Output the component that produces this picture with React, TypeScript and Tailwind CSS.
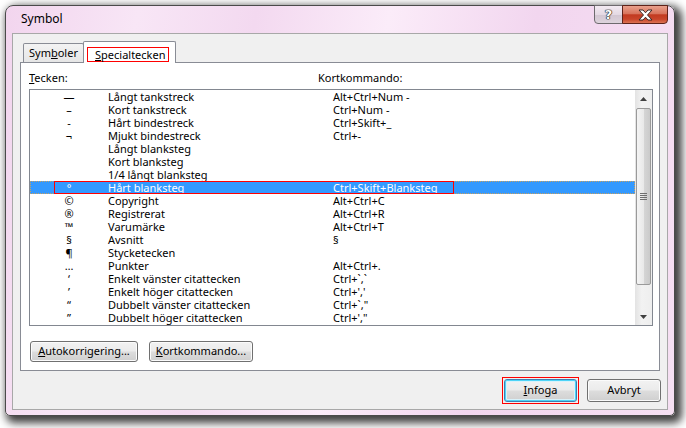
import React from "react";

const rows: [string, string, string][] = [
    ["—", "Långt tankstreck", "Alt+Ctrl+Num -"],
    ["–", "Kort tankstreck", "Ctrl+Num -"],
    ["-", "Hårt bindestreck", "Ctrl+Skift+_"],
    ["¬", "Mjukt bindestreck", "Ctrl+-"],
    ["", "Långt blanksteg", ""],
    ["", "Kort blanksteg", ""],
    ["", "1/4 långt blanksteg", ""],
    ["°", "Hårt blanksteg", "Ctrl+Skift+Blanksteg"],
    ["©", "Copyright", "Alt+Ctrl+C"],
    ["®", "Registrerat", "Alt+Ctrl+R"],
    ["™", "Varumärke", "Alt+Ctrl+T"],
    ["§", "Avsnitt", "§"],
    ["¶", "Stycketecken", ""],
    ["…", "Punkter", "Alt+Ctrl+."],
    ["‘", "Enkelt vänster citattecken", "Ctrl+`,`"],
    ["’", "Enkelt höger citattecken", "Ctrl+','"],
    ["“", "Dubbelt vänster citattecken", "Ctrl+`,\""],
    ["”", "Dubbelt höger citattecken", "Ctrl+',\""],
];

const SELECTED = 7;

function WinButton({ children, className = "", focused = false }: { children: React.ReactNode; className?: string; focused?: boolean }) {
    return (
        <div
            className={
                "flex items-center justify-center rounded-[3px] border bg-[linear-gradient(#f2f2f2_0%,#ebebeb_48%,#dddddd_52%,#cfcfcf_100%)] " +
                (focused
                    ? "border-[#3c7fb1] shadow-[inset_0_0_0_1px_#4fd4f7,inset_0_0_0_2px_#d8f2fb] "
                    : "border-[#707070] shadow-[inset_0_0_0_1px_#fbfbfb] ") +
                className
            }
        >
            {children}
        </div>
    );
}

function ScrollBar() {
    return (
        <div className="w-[17px] flex flex-col bg-[linear-gradient(90deg,#e3e3e3,#f2f2f2_40%,#eeeeee)]">
            <div className="h-[17px] flex items-center justify-center">
                <svg width="7" height="4" viewBox="0 0 7 4">
                    <path d="M3.5 0 L7 4 L0 4 Z" fill="#404040" />
                </svg>
            </div>
            <div className="h-px" />
            <div className="mx-px h-[177px] rounded-[2px] border border-[#9a9a9a] bg-[linear-gradient(90deg,#f4f4f4_0%,#e9e9e9_50%,#d6d6d6_51%,#cacaca_100%)] flex flex-col items-center justify-center gap-px">
                <div className="w-[7px] h-px bg-[#6f6f6f]" />
                <div className="w-[7px] h-px bg-[#6f6f6f]" />
                <div className="w-[7px] h-px bg-[#6f6f6f]" />
                <div className="w-[7px] h-px bg-[#6f6f6f]" />
            </div>
            <div className="flex-1" />
            <div className="h-[17px] flex items-center justify-center">
                <svg width="7" height="4" viewBox="0 0 7 4">
                    <path d="M0 0 L7 0 L3.5 4 Z" fill="#404040" />
                </svg>
            </div>
        </div>
    );
}

export default function App() {
    return (
        <div className="w-[686px] h-[428px] bg-white overflow-hidden pl-[5px] pt-[5px] font-['Noto_Sans',sans-serif] text-[11px] text-black">
            <div className="w-[670px] h-[411px] flex flex-col rounded-t-[8px] rounded-b-[5px] border border-[#4a4a4a] bg-[linear-gradient(100deg,#f2d5ee_0%,#f8e6f6_18%,#f3d9f0_34%,#fbecf9_52%,#f2d6ef_72%,#f6e0f3_100%)] shadow-[4px_4px_8px_3px_rgba(0,0,0,0.75)] px-[6px] pb-[5px]">
                {/* Title bar */}
                <div className="h-[27px] shrink-0 flex items-start">
                    <span className="ml-[9px] mt-[5px] text-[12px] leading-[16px]">Symbol</span>
                    <div className="ml-auto -mt-px flex">
                        <div className="w-[29px] h-[19px] rounded-bl-[4px] border border-[#6e6a6e] bg-[linear-gradient(#f3eaf2_0%,#e4d9e3_50%,#d2c6d1_52%,#ddd3dc_100%)] flex items-center justify-center">
                            <span className="font-['DejaVu_Sans',sans-serif] font-bold text-[13px] leading-[13px] text-white [text-shadow:0_0_1px_#222,0_0_1px_#222,0_0_1px_#222,0_0_1px_#222]">?</span>
                        </div>
                        <div className="w-[46px] h-[19px] -ml-px rounded-br-[4px] border border-[#5e2219] bg-[linear-gradient(#e9a08c_0%,#d8745c_45%,#c23a20_52%,#c9452a_78%,#dc7353_100%)] flex items-center justify-center">
                            <svg width="15" height="12" viewBox="0 0 15 12">
                                <path d="M1 1 L5 1 L7.5 3.8 L10 1 L14 1 L9.5 6 L14 11 L10 11 L7.5 8.2 L5 11 L1 11 L5.5 6 Z" fill="#ffffff" stroke="#3a2a28" strokeWidth="1" strokeLinejoin="round" />
                            </svg>
                        </div>
                    </div>
                </div>

                {/* Client area */}
                <div className="flex-1 flex flex-col bg-[#f0f0f0] border border-[#a8a8a8] px-[7px] pt-[7px]">
                    {/* Tabs */}
                    <div className="h-[21px] flex items-end">
                        <div className="ml-[3px] w-[61px] h-[19px] rounded-t-[2px] border border-b-0 border-[#898c95] bg-[linear-gradient(#f3f3f3,#e6e6e6)] flex items-center justify-center">
                            <span>Sym<span className="underline">b</span>oler</span>
                        </div>
                        <div className="relative z-10 -ml-px -mb-px w-[93px] h-[22px] rounded-t-[2px] border border-b-0 border-[#898c95] bg-white flex items-start">
                            <div className="ml-[3px] mt-[5px] w-[82px] h-[15px] border border-[#ff0000] pl-[7px] flex items-center leading-[13px]">
                                <span><span className="underline">S</span>pecialtecken</span>
                            </div>
                        </div>
                    </div>

                    {/* Tab page */}
                    <div className="h-[309px] shrink-0 border border-[#898c95] bg-white flex flex-col">
                        <div className="mt-[8px] ml-[8px] flex leading-[13px]">
                            <span className="w-[289px]"><span className="underline">T</span>ecken:</span>
                            <span>Kortkommando:</span>
                        </div>

                        <div className="mt-[5px] ml-[8px] w-[624px] h-[237px] border border-[#828790] flex">
                            <div className="flex-1 flex flex-col">
                                {rows.map(([sym, name, key], i) => (
                                    <div
                                        key={name}
                                        className={
                                            "relative h-[13px] flex leading-[13px] " +
                                            (i === SELECTED ? "bg-[#3399ff] text-white" : "")
                                        }
                                    >
                                        {i === SELECTED && (
                                            <div className="absolute inset-0 border border-dotted border-[#c8a060]" />
                                        )}
                                        <span className="relative w-[78px] text-center">{sym}</span>
                                        <span className="relative w-[225px]">{name}</span>
                                        <span className="relative">{key}</span>
                                        {i === SELECTED && (
                                            <div className="absolute z-10 left-[24px] top-0 w-[400px] h-[13px] border border-[#ff0000]" />
                                        )}
                                    </div>
                                ))}
                            </div>
                            <ScrollBar />
                        </div>

                        <div className="mt-[15px] ml-[9px] flex gap-[11px]">
                            <WinButton className="w-[108px] h-[21px]">
                                <span><span className="underline">A</span>utokorrigering...</span>
                            </WinButton>
                            <WinButton className="w-[104px] h-[21px]">
                                <span><span className="underline">K</span>ortkommando...</span>
                            </WinButton>
                        </div>
                    </div>

                    {/* Dialog buttons */}
                    <div className="mt-[6px] flex justify-end items-start -mr-px">
                        <div className="border border-[#ff0000] p-px">
                            <WinButton focused className="w-[73px] h-[23px]">
                                <span><span className="underline">I</span>nfoga</span>
                            </WinButton>
                        </div>
                        <WinButton className="ml-[8px] mt-[2px] w-[74px] h-[23px]">
                            <span>Avbryt</span>
                        </WinButton>
                    </div>
                </div>
            </div>
        </div>
    );
}
